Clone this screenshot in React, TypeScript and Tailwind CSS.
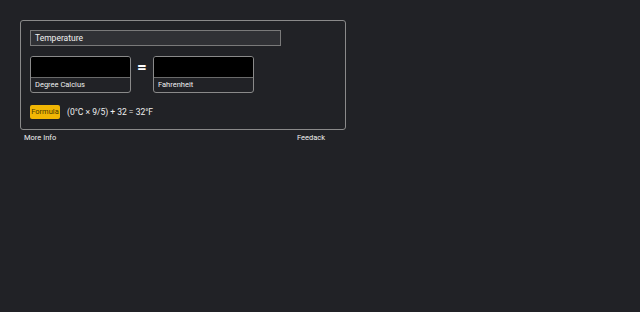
const App = () => (
	<div
		className="min-h-[312px] w-full bg-[#212226] pt-[20px] pl-[20px] text-[8px] text-[#e8e8e8]"
		style={{ fontFamily: 'Roboto, "Open Sans", sans-serif' }}
	>
		<div className="w-[326px]">
			<div className="rounded-[3px] border border-[#8a8a8a] px-[9px] pt-[9px] pb-[10px]">
				<div className="flex h-[16px] w-[251px] items-center border border-[#7a7a7a] bg-[#303135] px-[4px] text-[8.5px] text-[#f0f0f0]">
					Temperature
				</div>
				<div className="mt-[10px] flex items-start">
					<UnitBox label="Degree Calcius" />
					<div className="flex w-[22px] items-center justify-center pt-[1px] text-[17px] font-bold leading-[20px] text-white">
						=
					</div>
					<UnitBox label="Fahrenheit" />
				</div>
				<div className="mt-[12px] flex items-center gap-[7px]">
					<span className="flex h-[14px] w-[30px] items-center justify-center rounded-[2px] bg-[#f1b604] text-[7.5px] text-[#4a3a00]">
						Formula
					</span>
					<span className="text-[8.5px] text-[#f0f0f0]">(0°C × 9/5) + 32 = 32°F</span>
				</div>
			</div>
			<div className="flex justify-between pr-[21px] pl-[4px] pt-[3px] text-[7.5px] leading-[10px] text-[#f0f0f0]">
				<span>More Info</span>
				<span>Feedack</span>
			</div>
		</div>
	</div>
);

const UnitBox = ({ label }: { label: string }) => (
	<div className="w-[101px] overflow-hidden rounded-[3px] border border-[#8a8a8a]">
		<div className="h-[20px] bg-black" />
		<div className="flex h-[15px] items-center border-t border-[#6a6a6a] px-[4px] text-[7.5px] text-[#f0f0f0]">
			{label}
		</div>
	</div>
);

export default App;
